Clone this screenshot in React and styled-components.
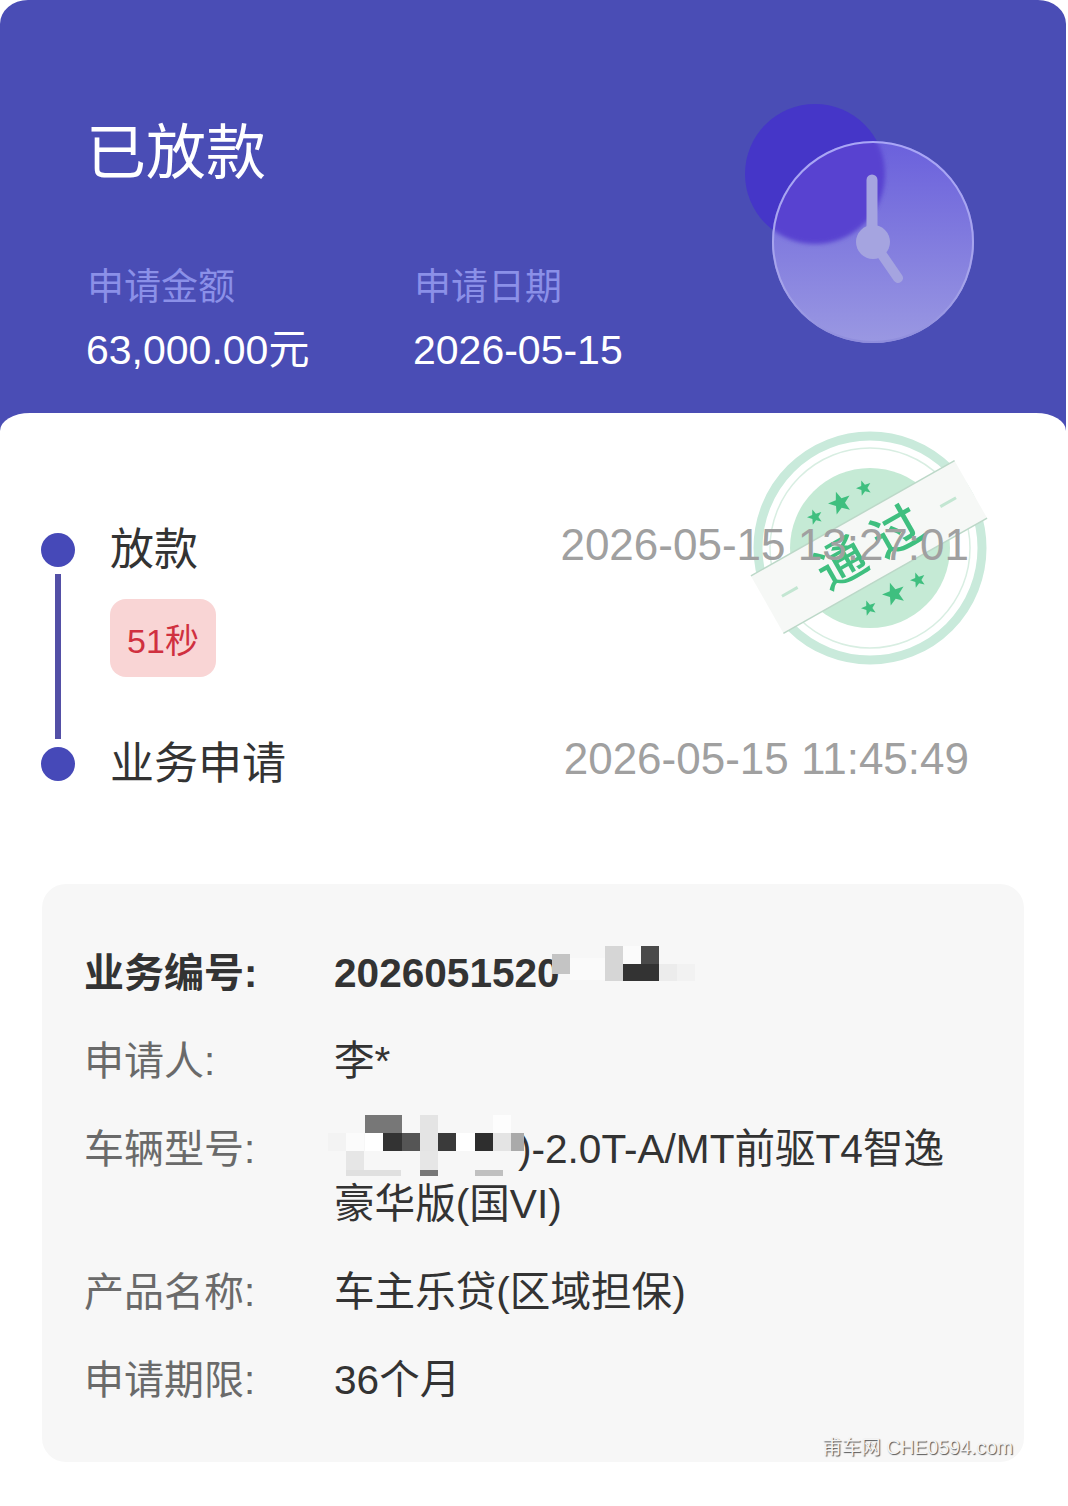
import React from 'react';
import styled, { createGlobalStyle } from 'styled-components';

const GlobalStyle = createGlobalStyle`
  html, body {
    margin: 0;
    padding: 0;
    background: #fff;
    font-family: "Liberation Sans", "Noto Sans CJK SC", sans-serif;
  }
`;

const Page = styled.div`
  width: 1066px;
  height: 1506px;
  overflow: hidden;
`;

const Header = styled.header`
  position: relative;
  height: 432px;
  box-sizing: border-box;
  padding: 124px 0 0 86px;
  background: #4a4db5;
  border-radius: 28px 28px 0 0 / 24px 24px 0 0;
`;

const Title = styled.h1`
  margin: 0;
  font-size: 60px;
  line-height: 60px;
  font-weight: 400;
  color: #fff;
`;

const Summary = styled.div`
  display: flex;
  margin-top: 82px;
`;

const SummaryItem = styled.div`
  width: 327px;
`;

const SummaryLabel = styled.div`
  font-size: 37px;
  line-height: 44px;
  color: #8b90e8;
  padding-left: 1px;
`;

const SummaryValue = styled.div`
  margin-top: 18px;
  font-size: 41px;
  line-height: 44px;
  color: #fff;
`;

const ClockArt = styled.svg`
  position: absolute;
  left: 735px;
  top: 94px;
`;

const Sheet = styled.main`
  position: relative;
  margin-top: -19px;
  padding: 120px 0 0;
  background: #fff;
  border-radius: 30px 30px 0 0 / 18px 18px 0 0;
`;

const StampArt = styled.svg`
  position: absolute;
  left: 745px;
  top: 12px;
`;

const Steps = styled.div`
  padding: 0 97px 0 41px;
`;

const Step = styled.div`
  display: flex;
  height: ${(p) => p.$height}px;
`;

const Rail = styled.div`
  display: flex;
  flex-direction: column;
  align-items: center;
  width: 34px;
  margin-right: 35px;
`;

const Dot = styled.span`
  flex: none;
  width: 34px;
  height: 34px;
  border-radius: 50%;
  background: #4649b8;
`;

const RailLine = styled.span`
  flex: 1;
  width: 6px;
  margin: 7px 0 8px;
  background: #534fa6;
`;

const StepBody = styled.div`
  flex: 1;
  margin-top: -5px;
`;

const StepTitle = styled.div`
  font-size: 44px;
  line-height: 44px;
  color: #333;
`;

const Badge = styled.div`
  display: inline-flex;
  align-items: center;
  justify-content: center;
  width: 106px;
  height: 78px;
  margin-top: 27px;
  border-radius: 16px;
  background: #f9d5d5;
  color: #d0303f;
  font-size: 34px;
`;

const StepTime = styled.div`
  position: relative;
  margin-top: -10px;
  font-size: 44px;
  line-height: 44px;
  color: #a0a0a0;
  white-space: nowrap;
`;

const InfoCard = styled.section`
  position: relative;
  margin: 103px 42px 0;
  padding: 62px 40px 54px 42px;
  background: #f7f7f7;
  border-radius: 24px;
  display: grid;
  grid-template-columns: 250px 1fr;
  row-gap: 33px;
`;

const Label = styled.div`
  font-size: 40px;
  line-height: 55px;
  color: ${(p) => (p.$strong ? '#333' : '#6a6a6a')};
  font-weight: ${(p) => (p.$strong ? 700 : 400)};
`;

const Value = styled.div`
  font-size: 40.6px;
  line-height: 55px;
  color: #333;
  font-weight: ${(p) => (p.$strong ? 700 : 400)};
`;

const Redaction = styled.span`
  position: relative;
  display: inline-block;
  width: ${(p) => p.$width}px;
  height: 1em;
  vertical-align: baseline;
`;

const MosaicArt = styled.svg`
  position: absolute;
  left: ${(p) => p.$left}px;
  top: ${(p) => p.$top}px;
`;

const Watermark = styled.div`
  position: absolute;
  right: 11px;
  bottom: 3px;
  font-size: 19.5px;
  line-height: 24px;
  color: #f4f4f4;
  text-shadow: 1px 1px 1px #555;
  white-space: nowrap;
`;

// [x, y, w, h, colour] relative to the mosaic corner
const idCells = [
  [0, 8, 18, 20, '#c4c4c4'],
  [18, 12, 36, 22, '#fafafa'],
  [53, 0, 18, 35, '#d6d6d6'],
  [71, 0, 18, 18, '#fbfbfb'],
  [71, 18, 18, 17, '#333'],
  [89, 0, 18, 18, '#4a4a4a'],
  [89, 18, 18, 17, '#333'],
  [107, 18, 18, 17, '#ececec'],
  [125, 18, 18, 17, '#f2f2f2'],
];

const carCells = [
  [0, 18, 18, 18, '#f3f3f3'],
  [18, 18, 18, 18, '#fbfbfb'],
  [37, 0, 37, 18, '#777'],
  [37, 18, 18, 18, '#fff'],
  [55, 18, 19, 18, '#333'],
  [74, 18, 18, 18, '#555'],
  [92, 0, 18, 36, '#e4e4e4'],
  [92, 36, 18, 19, '#e6e6e6'],
  [92, 55, 18, 6, '#777'],
  [110, 18, 18, 18, '#3a3a3a'],
  [128, 18, 19, 18, '#fff'],
  [147, 18, 18, 18, '#2e2e2e'],
  [165, 0, 18, 18, '#fdfdfd'],
  [165, 18, 18, 18, '#e4e4e4'],
  [183, 18, 13, 18, '#aaa'],
  [18, 36, 18, 19, '#e6e6e6'],
  [18, 55, 55, 6, '#e0e0e0'],
  [147, 55, 28, 6, '#c0c0c0'],
];

const Mosaic = ({ cells, width, height, left, top }) => (
  <MosaicArt $left={left} $top={top} width={width} height={height} viewBox={`0 0 ${width} ${height}`}>
    {cells.map(([x, y, w, h, fill]) => (
      <rect key={`${x}-${y}`} x={x} y={y} width={w} height={h} fill={fill} />
    ))}
  </MosaicArt>
);

const Clock = () => (
  <ClockArt width="250" height="260" viewBox="735 94 250 260">
    <defs>
      <linearGradient id="glass" x1="0" y1="0" x2="0" y2="1">
        <stop offset="0" stopColor="#6a60dc" />
        <stop offset="0.45" stopColor="#7f79de" />
        <stop offset="1" stopColor="#9a98e2" />
      </linearGradient>
      <linearGradient id="rim" x1="0" y1="0" x2="0" y2="1">
        <stop offset="0" stopColor="#a9a6f6" />
        <stop offset="0.7" stopColor="#a6a4ea" />
        <stop offset="1" stopColor="#8f8ddc" />
      </linearGradient>
      <clipPath id="face">
        <circle cx="873" cy="242" r="101" />
      </clipPath>
      <filter id="soft" x="-20%" y="-20%" width="140%" height="140%">
        <feGaussianBlur stdDeviation="2" />
      </filter>
    </defs>
    <circle cx="815" cy="174" r="70" fill="#4536c8" />
    <circle cx="873" cy="242" r="101" fill="url(#glass)" />
    <g clipPath="url(#face)">
      <circle cx="815" cy="174" r="70" fill="#5842d0" filter="url(#soft)" />
    </g>
    <circle cx="873" cy="242" r="100" fill="none" stroke="url(#rim)" strokeWidth="2" />
    <g stroke="#a5a4e0" strokeLinecap="round" fill="none">
      <line x1="872" y1="180" x2="872" y2="240" strokeWidth="11" />
      <line x1="876" y1="246" x2="898" y2="278" strokeWidth="10" />
    </g>
    <circle cx="873" cy="242" r="17" fill="#a5a4e0" />
  </ClockArt>
);

const starPoints = (cx, cy, r, turn) => {
  const points = [];
  for (let i = 0; i < 10; i += 1) {
    const angle = ((i * 36 - 90 + turn) * Math.PI) / 180;
    const radius = i % 2 === 0 ? r : r * 0.42;
    points.push(`${(cx + radius * Math.cos(angle)).toFixed(1)},${(cy + radius * Math.sin(angle)).toFixed(1)}`);
  }
  return points.join(' ');
};

// page coordinates, the viewBox lines them up
const stars = [
  [843, 503, 12],
  [818, 517, 8],
  [867, 488, 8],
  [897, 594, 12],
  [872, 608, 8],
  [921, 580, 8],
];

const Stamp = () => (
  <StampArt width="250" height="240" viewBox="748 425 250 240">
    <circle cx="873" cy="548" r="112" fill="none" stroke="#c9eadb" strokeWidth="9" />
    <circle cx="873" cy="548" r="100" fill="none" stroke="#d8eee2" strokeWidth="1.5" />
    <circle cx="873" cy="548" r="80" fill="#c5ead5" />
    {stars.map(([x, y, r]) => (
      <polygon key={`${x}-${y}`} points={starPoints(x, y, r, -20)} fill="#3fbf7f" />
    ))}
    <g transform="rotate(-29.5 872 547)">
      <rect x="755" y="514" width="234" height="66" fill="#f6f8f6" />
      <line x1="755" y1="514" x2="989" y2="514" stroke="#bcd8c8" strokeWidth="1.5" />
      <line x1="755" y1="580" x2="989" y2="580" stroke="#bcd8c8" strokeWidth="1.5" />
      <line x1="772" y1="547" x2="790" y2="547" stroke="#c3e6d2" strokeWidth="3" />
      <line x1="954" y1="547" x2="972" y2="547" stroke="#c3e6d2" strokeWidth="3" />
      <text
        x="879"
        y="565"
        textAnchor="middle"
        fontSize="50"
        letterSpacing="14"
        fontWeight="500"
        fill="#3fbf7f"
        fontFamily='"Noto Sans CJK SC", sans-serif'
      >
        通过
      </text>
    </g>
  </StampArt>
);

const App = () => (
  <Page>
    <GlobalStyle />
    <Header>
      <Title>已放款</Title>
      <Summary>
        <SummaryItem>
          <SummaryLabel>申请金额</SummaryLabel>
          <SummaryValue>63,000.00元</SummaryValue>
        </SummaryItem>
        <SummaryItem>
          <SummaryLabel>申请日期</SummaryLabel>
          <SummaryValue>2026-05-15</SummaryValue>
        </SummaryItem>
      </Summary>
      <Clock />
    </Header>
    <Sheet>
      <Stamp />
      <Steps>
        <Step $height={214}>
          <Rail>
            <Dot />
            <RailLine />
          </Rail>
          <StepBody>
            <StepTitle>放款</StepTitle>
            <Badge>51秒</Badge>
          </StepBody>
          <StepTime>2026-05-15 13:27:01</StepTime>
        </Step>
        <Step $height={34}>
          <Rail>
            <Dot />
          </Rail>
          <StepBody>
            <StepTitle>业务申请</StepTitle>
          </StepBody>
          <StepTime>2026-05-15 11:45:49</StepTime>
        </Step>
      </Steps>
      <InfoCard>
        <Label $strong>业务编号:</Label>
        <Value $strong>
          2026051520
          <Redaction $width={10}>
            <Mosaic cells={idCells} width={145} height={40} left={-8} top={0} />
          </Redaction>
        </Value>
        <Label>申请人:</Label>
        <Value>李*</Value>
        <Label>车辆型号:</Label>
        <Value>
          <Redaction $width={184}>
            <Mosaic cells={carCells} width={197} height={62} left={-6} top={-7} />
          </Redaction>
          )-2.0T-A/MT前驱T4智逸豪华版(国VI)
        </Value>
        <Label>产品名称:</Label>
        <Value>车主乐贷(区域担保)</Value>
        <Label>申请期限:</Label>
        <Value>36个月</Value>
        <Watermark>甫车网 CHE0594.com</Watermark>
      </InfoCard>
    </Sheet>
  </Page>
);

export default App;
